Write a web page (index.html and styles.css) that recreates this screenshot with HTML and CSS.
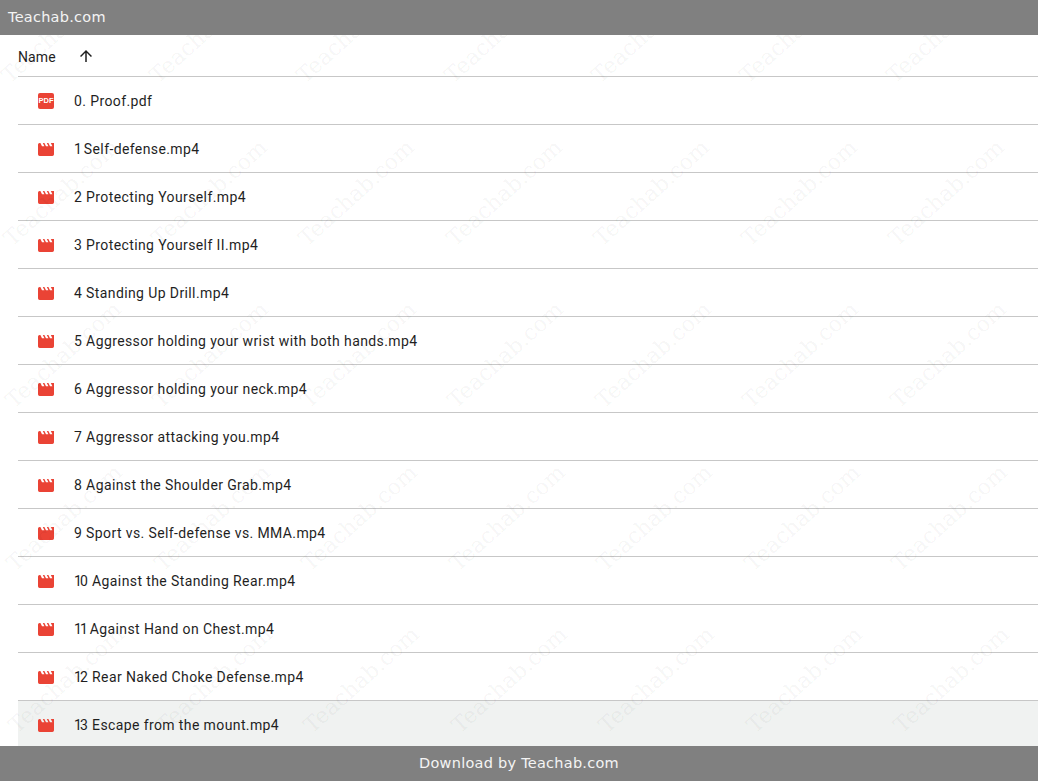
FILE: index.html
```html
<!DOCTYPE html>
<html lang="en">
<head>
    <meta charset="UTF-8">
    <meta name="viewport" content="width=device-width, initial-scale=1.0">
    <title>Teachab.com</title>
    <link rel="stylesheet" href="styles.css">
</head>
<body>
    <header class="top-bar">Teachab.com</header>

    <main class="listing">
        <div class="list-head">
            <span class="head-name">Name</span>
            <svg class="sort-arrow" viewBox="0 0 24 24"><path d="M4 12l1.41 1.41L11 7.83V20h2V7.83l5.58 5.59L20 12l-8-8-8 8z"/></svg>
        </div>

        <div class="file-row">
            <span class="pdf-icon">PDF</span>
            <span class="file-name">0. Proof.pdf</span>
        </div>
        <div class="file-row">
            <svg class="film-icon" viewBox="2 4 20 16"><path d="M18 4l2 4h-3l-2-4h-2l2 4h-3l-2-4H8l2 4H7L5 4H4c-1.1 0-1.99.9-1.99 2L2 18c0 1.1.9 2 2 2h16c1.1 0 2-.9 2-2V4h-4z"/></svg>
            <span class="file-name"><span class="one">1</span> Self-defense.mp4</span>
        </div>
        <div class="file-row">
            <svg class="film-icon" viewBox="2 4 20 16"><path d="M18 4l2 4h-3l-2-4h-2l2 4h-3l-2-4H8l2 4H7L5 4H4c-1.1 0-1.99.9-1.99 2L2 18c0 1.1.9 2 2 2h16c1.1 0 2-.9 2-2V4h-4z"/></svg>
            <span class="file-name">2 Protecting Yourself.mp4</span>
        </div>
        <div class="file-row">
            <svg class="film-icon" viewBox="2 4 20 16"><path d="M18 4l2 4h-3l-2-4h-2l2 4h-3l-2-4H8l2 4H7L5 4H4c-1.1 0-1.99.9-1.99 2L2 18c0 1.1.9 2 2 2h16c1.1 0 2-.9 2-2V4h-4z"/></svg>
            <span class="file-name">3 Protecting Yourself II.mp4</span>
        </div>
        <div class="file-row">
            <svg class="film-icon" viewBox="2 4 20 16"><path d="M18 4l2 4h-3l-2-4h-2l2 4h-3l-2-4H8l2 4H7L5 4H4c-1.1 0-1.99.9-1.99 2L2 18c0 1.1.9 2 2 2h16c1.1 0 2-.9 2-2V4h-4z"/></svg>
            <span class="file-name">4 Standing Up Drill.mp4</span>
        </div>
        <div class="file-row">
            <svg class="film-icon" viewBox="2 4 20 16"><path d="M18 4l2 4h-3l-2-4h-2l2 4h-3l-2-4H8l2 4H7L5 4H4c-1.1 0-1.99.9-1.99 2L2 18c0 1.1.9 2 2 2h16c1.1 0 2-.9 2-2V4h-4z"/></svg>
            <span class="file-name">5 Aggressor holding your wrist with both hands.mp4</span>
        </div>
        <div class="file-row">
            <svg class="film-icon" viewBox="2 4 20 16"><path d="M18 4l2 4h-3l-2-4h-2l2 4h-3l-2-4H8l2 4H7L5 4H4c-1.1 0-1.99.9-1.99 2L2 18c0 1.1.9 2 2 2h16c1.1 0 2-.9 2-2V4h-4z"/></svg>
            <span class="file-name">6 Aggressor holding your neck.mp4</span>
        </div>
        <div class="file-row">
            <svg class="film-icon" viewBox="2 4 20 16"><path d="M18 4l2 4h-3l-2-4h-2l2 4h-3l-2-4H8l2 4H7L5 4H4c-1.1 0-1.99.9-1.99 2L2 18c0 1.1.9 2 2 2h16c1.1 0 2-.9 2-2V4h-4z"/></svg>
            <span class="file-name">7 Aggressor attacking you.mp4</span>
        </div>
        <div class="file-row">
            <svg class="film-icon" viewBox="2 4 20 16"><path d="M18 4l2 4h-3l-2-4h-2l2 4h-3l-2-4H8l2 4H7L5 4H4c-1.1 0-1.99.9-1.99 2L2 18c0 1.1.9 2 2 2h16c1.1 0 2-.9 2-2V4h-4z"/></svg>
            <span class="file-name">8 Against the Shoulder Grab.mp4</span>
        </div>
        <div class="file-row">
            <svg class="film-icon" viewBox="2 4 20 16"><path d="M18 4l2 4h-3l-2-4h-2l2 4h-3l-2-4H8l2 4H7L5 4H4c-1.1 0-1.99.9-1.99 2L2 18c0 1.1.9 2 2 2h16c1.1 0 2-.9 2-2V4h-4z"/></svg>
            <span class="file-name">9 Sport vs. Self-defense vs. MMA.mp4</span>
        </div>
        <div class="file-row">
            <svg class="film-icon" viewBox="2 4 20 16"><path d="M18 4l2 4h-3l-2-4h-2l2 4h-3l-2-4H8l2 4H7L5 4H4c-1.1 0-1.99.9-1.99 2L2 18c0 1.1.9 2 2 2h16c1.1 0 2-.9 2-2V4h-4z"/></svg>
            <span class="file-name"><span class="one">1</span>0 Against the Standing Rear.mp4</span>
        </div>
        <div class="file-row">
            <svg class="film-icon" viewBox="2 4 20 16"><path d="M18 4l2 4h-3l-2-4h-2l2 4h-3l-2-4H8l2 4H7L5 4H4c-1.1 0-1.99.9-1.99 2L2 18c0 1.1.9 2 2 2h16c1.1 0 2-.9 2-2V4h-4z"/></svg>
            <span class="file-name"><span class="one">11</span> Against Hand on Chest.mp4</span>
        </div>
        <div class="file-row">
            <svg class="film-icon" viewBox="2 4 20 16"><path d="M18 4l2 4h-3l-2-4h-2l2 4h-3l-2-4H8l2 4H7L5 4H4c-1.1 0-1.99.9-1.99 2L2 18c0 1.1.9 2 2 2h16c1.1 0 2-.9 2-2V4h-4z"/></svg>
            <span class="file-name"><span class="one">1</span>2 Rear Naked Choke Defense.mp4</span>
        </div>
        <div class="file-row hovered">
            <svg class="film-icon" viewBox="2 4 20 16"><path d="M18 4l2 4h-3l-2-4h-2l2 4h-3l-2-4H8l2 4H7L5 4H4c-1.1 0-1.99.9-1.99 2L2 18c0 1.1.9 2 2 2h16c1.1 0 2-.9 2-2V4h-4z"/></svg>
            <span class="file-name"><span class="one">1</span>3 Escape from the mount.mp4</span>
        </div>

        <!-- watermark tiles -->
        <div class="watermark">
            <div class="wm-row"><span>Teachab.com</span><span>Teachab.com</span><span>Teachab.com</span><span>Teachab.com</span><span>Teachab.com</span><span>Teachab.com</span><span>Teachab.com</span></div>
            <div class="wm-row"><span>Teachab.com</span><span>Teachab.com</span><span>Teachab.com</span><span>Teachab.com</span><span>Teachab.com</span><span>Teachab.com</span><span>Teachab.com</span></div>
            <div class="wm-row"><span>Teachab.com</span><span>Teachab.com</span><span>Teachab.com</span><span>Teachab.com</span><span>Teachab.com</span><span>Teachab.com</span><span>Teachab.com</span></div>
            <div class="wm-row"><span>Teachab.com</span><span>Teachab.com</span><span>Teachab.com</span><span>Teachab.com</span><span>Teachab.com</span><span>Teachab.com</span><span>Teachab.com</span></div>
            <div class="wm-row"><span>Teachab.com</span><span>Teachab.com</span><span>Teachab.com</span><span>Teachab.com</span><span>Teachab.com</span><span>Teachab.com</span><span>Teachab.com</span></div>
        </div>
    </main>

    <footer class="bottom-bar">Download by Teachab.com</footer>
</body>
</html>
```

FILE: styles.css
```css
html, body {
    height: 100%;
}
body {
    margin: 0;
    display: flex;
    flex-direction: column;
    overflow: hidden;
    background: #fff;
    font-family: Roboto, "Noto Sans", sans-serif;
    color: #1f1f1f;
}
.top-bar, .bottom-bar {
    flex: none;
    height: 35px;
    line-height: 35px;
    background: #808080;
    color: #f4f4f4;
    font-family: "DejaVu Sans", sans-serif;
    font-size: 14.5px;
    letter-spacing: 0.25px;
    position: relative;
    z-index: 2;
}
.top-bar {
    padding-left: 8px;
}
.bottom-bar {
    text-align: center;
}
.listing {
    flex: 1;
    min-height: 0;
    position: relative;
    padding-left: 18px;
}
.list-head {
    display: flex;
    align-items: center;
    height: 41px;
    border-bottom: 1px solid #c7c7c7;
    font-size: 14px;
}
.head-name {
    width: 59px;
    padding-top: 2px;
    letter-spacing: 0.1px;
}
.sort-arrow {
    width: 18px;
    height: 18px;
    fill: #1f1f1f;
}
.file-row {
    display: flex;
    align-items: center;
    height: 47px;
    padding-left: 20px;
    border-bottom: 1px solid #c7c7c7;
    font-size: 14px;
    letter-spacing: 0.39px;
}
.file-row.hovered {
    background: #f0f2f1;
    border-bottom: none;
}
.film-icon {
    flex: none;
    width: 16px;
    height: 13px;
    margin-top: 2px;
    fill: #ea4335;
}
.pdf-icon {
    flex: none;
    width: 16px;
    height: 16px;
    border-radius: 2px;
    background: #ea4335;
    color: #fff;
    font-family: "Liberation Sans", sans-serif;
    font-size: 7.5px;
    font-weight: 700;
    letter-spacing: 0;
    line-height: 16px;
    text-align: center;
}
.file-name {
    margin-left: 20px;
}
/* the 1 is narrower in the original face */
.one {
    letter-spacing: -1.9px;
}
.watermark {
    position: absolute;
    top: -86px;
    left: -14px;
    pointer-events: none;
}
.wm-row {
    display: flex;
    height: 162.5px;
}
.wm-row:nth-child(2) { margin-left: 2px; }
.wm-row:nth-child(3) { margin-left: 3.5px; }
.wm-row:nth-child(4) { margin-left: 5px; }
.wm-row:nth-child(5) { margin-left: 7px; }
.wm-row span {
    flex: none;
    width: 147.5px;
    text-align: center;
    line-height: 162.5px;
    white-space: nowrap;
    font-family: "DejaVu Serif", serif;
    font-size: 22px;
    color: rgba(0, 0, 0, 0.05);
    transform: rotate(-42deg);
}
```
